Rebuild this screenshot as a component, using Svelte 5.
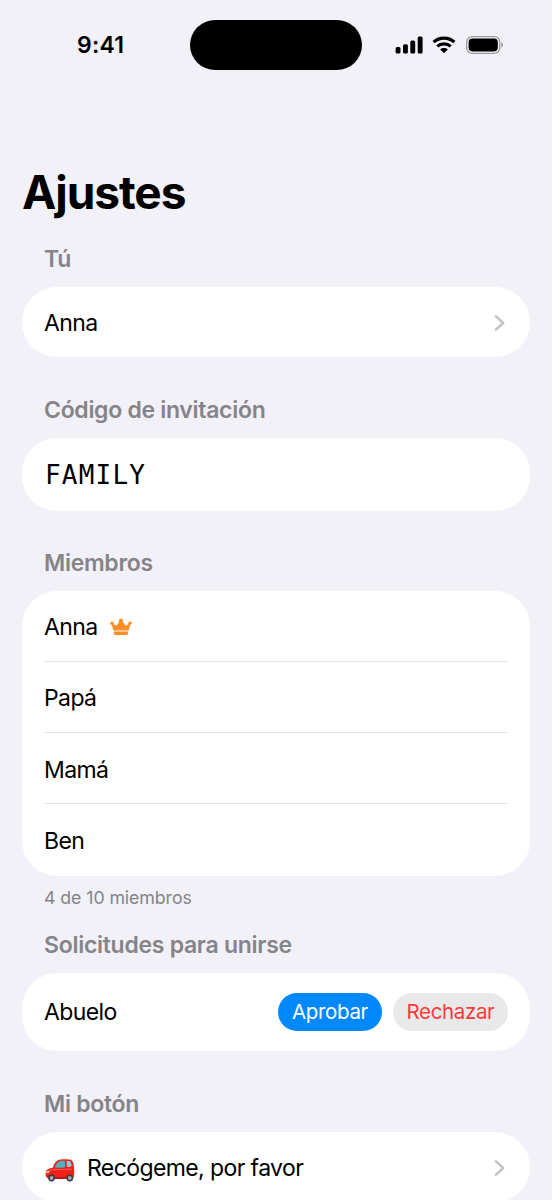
<script lang="ts">
	const members = [
		{ name: 'Anna', admin: true },
		{ name: 'Papá', admin: false },
		{ name: 'Mamá', admin: false },
		{ name: 'Ben', admin: false }
	];
	const maxMembers = 10;
	const inviteCode = 'FAMILY';
</script>

{#snippet chevron()}
	<svg class="chevron" width="12" height="18" viewBox="0 0 12 18" aria-hidden="true">
		<path d="M2 2.4 9.2 9 2 15.6" />
	</svg>
{/snippet}

<div class="screen">
	<header class="status-bar">
		<span class="time">9:41</span>
		<div class="island"></div>
		<div class="status-icons">
			<svg width="28" height="18" viewBox="0 0 28 18" aria-hidden="true">
				<rect x="0.6" y="11" width="4.9" height="6.4" rx="1.5" />
				<rect x="8" y="8.2" width="4.9" height="9.2" rx="1.5" />
				<rect x="15.3" y="4.4" width="4.9" height="13" rx="1.5" />
				<rect x="22.7" y="0.5" width="4.9" height="16.9" rx="1.5" />
			</svg>
			<svg class="wifi" width="24" height="18" viewBox="0 0 24 18" aria-hidden="true">
				<path d="M1.6 6.1C7.5.7 16.5.7 22.4 6.1" />
				<path d="M5.3 10.4c3.8-3.4 9.6-3.4 13.4 0" />
				<path class="dot" d="M8.2 13.4c2.1-1.8 5.5-1.8 7.6 0L12 17.3z" />
			</svg>
			<svg class="battery" width="38" height="18" viewBox="0 0 38 18" aria-hidden="true">
				<rect class="shell" x="0.7" y="0.7" width="33" height="16.6" rx="5.4" />
				<rect x="2.6" y="2.6" width="29.2" height="12.8" rx="3.8" />
				<path class="cap" d="M35.2 6.3c2.4.8 2.4 4.6 0 5.4z" />
			</svg>
		</div>
	</header>

	<h1>Ajustes</h1>

	<section>
		<h2>Tú</h2>
		<div class="card">
			<div class="row">
				<span>Anna</span>
				{@render chevron()}
			</div>
		</div>
	</section>

	<section class="invitation">
		<h2>Código de invitación</h2>
		<div class="card">
			<div class="row code-row">
				<span class="code">{inviteCode}</span>
			</div>
		</div>
	</section>

	<section class="members">
		<h2>Miembros</h2>
		<div class="card">
			{#each members as member}
				<div class="row">
					<span>{member.name}</span>
					{#if member.admin}
						<svg class="crown" width="22" height="18" viewBox="0 0 22 18" aria-hidden="true">
							<path d="M3.4 12.5 1.4 5.6 6.6 7.6 10 2.6h2l3.4 5 5.2-2-2 6.9z" />
							<circle cx="2" cy="5.2" r="1.7" />
							<circle cx="11" cy="2.4" r="2" />
							<circle cx="20" cy="5.2" r="1.7" />
							<path d="M3.6 13.6h14.8l-.3 1.7c-.2 1.1-.8 1.6-1.8 1.6H5.7c-1 0-1.6-.5-1.8-1.6z" />
						</svg>
					{/if}
				</div>
			{/each}
		</div>
		<p class="footnote">{members.length} de {maxMembers} miembros</p>
	</section>

	<section>
		<h2 class="wide">Solicitudes para unirse</h2>
		<div class="card">
			<div class="row request-row">
				<span>Abuelo</span>
				<div class="actions">
					<button class="approve">Aprobar</button>
					<button class="reject">Rechazar</button>
				</div>
			</div>
		</div>
	</section>

	<section>
		<h2>Mi botón</h2>
		<div class="card">
			<div class="row">
				<svg class="car" width="30" height="24" viewBox="0 0 30 24" aria-hidden="true">
					<path d="m24.5 3 1.8-2.6" stroke="#777" stroke-width=".6" />
					<path fill="#f0201a" d="M.8 14.2c.3-2.2 2.9-3.7 7.2-4.6 1.3-4.5 3-7.2 6.6-7.9 3.8-.8 9.9-.5 11.9.5 1.8 1 2.5 4.9 2.7 9.3.3 3.1 0 6.3-.6 8.1-4 1.3-21.7 1.5-26.5.2C.6 18.7.3 16.3.8 14.2z" />
					<path fill="#55aebb" d="M9.8 9.6c1.3-4.1 3-6.2 5.4-6.7 1.2-.2 3.2-.2 4.7-.2l.3 6.5c-3.4.5-7.2.6-10.4.4z" />
					<path fill="#8bd0d5" d="M21.6 2.9c1.3 0 2.4.1 3.2.4 1 .6 1.6 2.4 1.9 5-1.6.4-3.1.6-4.7.7z" />
					<path fill="#ff6052" d="M3.2 12.5c4-2 13.8-1.4 24-1.7v.7c-10 .4-18 .3-24 1.6z" />
					<path fill="#ae1414" d="M2 19.2h26.2l-.4 1c-7 .9-19 1-25.4 0z" />
					<path fill="#ffe9a2" d="M1.5 13.7c1-.7 2.3-.8 3-.1-.2 1.1-1.7 1.8-3.3 1.6z" />
					<circle cx="6.6" cy="20" r="3.4" fill="#383b40" />
					<circle cx="24.8" cy="20" r="3.4" fill="#383b40" />
					<circle cx="6.6" cy="20" r="1.9" fill="#a4a7ab" />
					<circle cx="24.8" cy="20" r="1.9" fill="#a4a7ab" />
				</svg>
				<span class="label">Recógeme, por favor</span>
				{@render chevron()}
			</div>
		</div>
	</section>
</div>

<style>
	:global(body) {
		background: #f2f1f7;
	}

	.screen {
		box-sizing: border-box;
		width: 552px;
		height: 1200px;
		padding: 0 22px;
		overflow: hidden;
		background: #f2f1f7;
		color: #000;
		font-family: Inter, 'Liberation Sans', sans-serif;
		font-size: 23px;
		letter-spacing: -0.6px;
		white-space: nowrap;
	}

	.status-bar {
		display: grid;
		grid-template-columns: 1fr 172px 1fr;
		align-items: center;
		height: 50px;
		padding-top: 20px;
	}

	.time {
		padding-left: 55px;
		font-size: 23px;
		font-weight: 600;
		letter-spacing: 0.2px;
	}

	.island {
		height: 50px;
		border-radius: 25px;
		background: #000;
	}

	.status-icons {
		display: flex;
		align-items: center;
		padding-left: 33px;
	}

	.wifi {
		margin-left: 9px;
		fill: none;
		stroke: #000;
		stroke-width: 3.2;
	}

	.wifi .dot {
		fill: #000;
		stroke: none;
	}

	.battery {
		margin-left: 10px;
	}

	.battery .shell {
		fill: none;
		stroke: #9b9b9f;
		stroke-width: 1.3;
	}

	.battery .cap {
		fill: #9b9b9f;
	}

	h1 {
		height: 56px;
		margin: 94px 0 0;
		font-size: 46px;
		font-weight: 700;
		line-height: 56px;
		letter-spacing: -1.05px;
	}

	section {
		margin-bottom: 38px;
	}

	h1 + section {
		margin-top: 24px;
	}

	h2 {
		height: 30px;
		margin: 0 0 13px;
		padding-left: 22px;
		color: #858489;
		font-size: 23px;
		font-weight: 600;
		line-height: 30px;
		letter-spacing: -0.3px;
	}

	h2.wide {
		letter-spacing: -0.28px;
	}

	.card {
		padding: 0 22px;
		border-radius: 35px;
		background: #fff;
	}

	.row {
		box-sizing: border-box;
		display: flex;
		align-items: center;
		height: 70px;
		padding-top: 1px;
	}

	.members .row {
		height: 71.25px;
	}

	.members .row:not(:last-child) {
		background: linear-gradient(#e6e6e6, #e6e6e6) 0 100% / 100% 1.4px no-repeat;
	}

	.code-row {
		height: 73px;
		padding-top: 0;
	}

	.code {
		padding-left: 1px;
		font-family: 'DejaVu Sans Mono', monospace;
		font-size: 26px;
		letter-spacing: 1.2px;
	}

	.chevron {
		margin-left: auto;
		margin-right: 2px;
		fill: none;
		stroke: #c3c3c5;
		stroke-width: 2.6;
		stroke-linecap: round;
		stroke-linejoin: round;
	}

	.crown {
		margin-left: 12px;
		fill: #ff8d28;
	}

	.invitation {
		margin-bottom: 37px;
	}

	.members {
		margin-bottom: 19px;
	}

	.footnote {
		margin: 9px 0 0;
		padding-left: 22px;
		color: #858489;
		font-size: 17.8px;
		line-height: 26px;
		letter-spacing: -0.1px;
	}

	.request-row {
		height: 78px;
		padding-top: 0;
	}

	.actions {
		display: flex;
		gap: 11px;
		margin-left: auto;
	}

	button {
		height: 38px;
		padding: 0 0 1px;
		border: 0;
		border-radius: 19px;
		font-family: inherit;
		font-size: 20.5px;
		letter-spacing: -0.35px;
	}

	.approve {
		width: 104px;
		background: #0088ff;
		color: #fff;
	}

	.reject {
		width: 115px;
		background: #e9e9ea;
		color: #ff383c;
	}

	.car {
		margin: 4px 12px 0 1px;
	}
</style>
